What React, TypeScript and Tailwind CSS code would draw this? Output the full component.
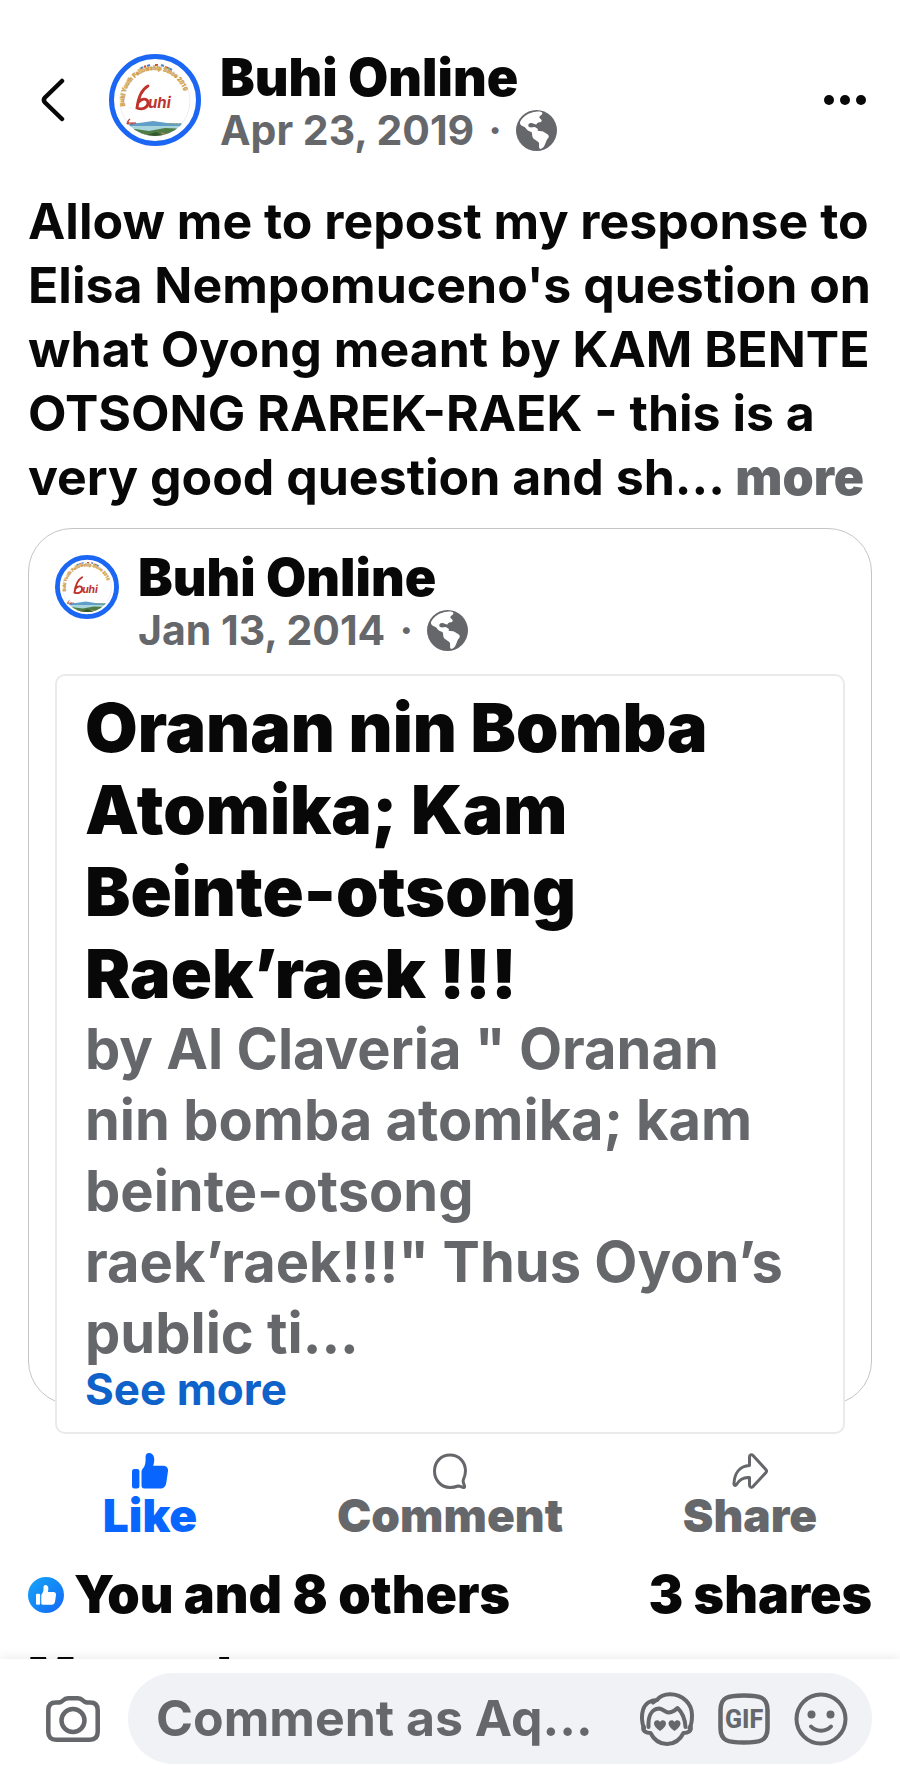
import type { ReactNode } from "react";

const font = "font-[Inter,'Liberation_Sans',sans-serif]";

function PageLogo({ className, ring = 5 }: { className: string; ring?: number }) {
  return (
    <svg viewBox="0 0 92 92" className={className} role="img" aria-label="Buhi Online">
      <defs>
        <path id="logo-arc" d="M16 52 A30.500 30.500 0 1 1 76 52" />
        <clipPath id="logo-clip">
          <circle cx="46" cy="46" r="36" />
        </clipPath>
      </defs>
      <circle cx="46" cy="46" r={46 - ring / 2} fill="#fff" stroke="#1b66f2" strokeWidth={ring} />
      <circle cx="46" cy="47" r="35" fill="none" stroke="#e3dfe6" strokeWidth="0.600" />
      <g clipPath="url(#logo-clip)">
        <path d="M8 70 L30 69 L44 67 L58 69 L84 70 V73 H8Z" fill="#5f9fc9" />
        <path d="M8 72 H84 V78 H8Z" fill="#a9d6dc" />
        <path d="M8 75 L26 75 L40 77 L56 74 L84 75 V92 H8Z" fill="#4f7d45" />
        <path d="M30 79 l8 2 l9 -3 l8 4 l10 -3 l-8 7 h-22Z" fill="#35592f" />
        <path d="M36 81 l5 1 M52 79 l4 1 M47 84 l5 -1" stroke="#b5825c" strokeWidth="1.500" />
      </g>
      <path
        d="M18 70 C18 67 20 66 21 65 M18 70 C20 70 21 68 19 68 M22 68 v2 h2 v-2 M26 68 v2"
        fill="none"
        stroke="#c0412f"
        strokeWidth="1.200"
      />
      <path d="M58 70 h14" stroke="#7d9f88" strokeWidth="1.500" strokeDasharray="2 1" />
      <path
        d="M31 15 l3 -2 M38 12 l3 -1 M52 11 l3 1 M59 14 l4 2"
        stroke="#4a83c4"
        strokeWidth="2"
      />
      <path d="M35 13 l2 -1 M46 11 l3 0 M56 13 l3 1" stroke="#d4502f" strokeWidth="2" />
      <text
        fontSize="6"
        fontWeight="700"
        fontFamily="Roboto, sans-serif"
        fill="#f2dca0"
        stroke="#cfa052"
        strokeWidth="0.600"
      >
        <textPath href="#logo-arc">Buhi Youth Fellowship Since 2010</textPath>
      </text>
      <path
        d="M39 32 C32 36 29 45 28 54 C33 56 39 54 39 49 C39 44 33 44 30 48"
        fill="none"
        stroke="#c0332c"
        strokeWidth="2.800"
        strokeLinecap="round"
      />
      <text x="39" y="54" fontSize="15" fontWeight="700" fontStyle="italic" fill="#c0332c">
        uhi
      </text>
    </svg>
  );
}

function GlobeIcon() {
  return (
    <svg viewBox="0 0 123 123" className="size-[41px] shrink-0" aria-label="Public">
      <circle cx="61.500" cy="61.500" r="61.500" fill="#65676b" />
      <path
        d="M12 36 C20 18 42 6 60 5 C68 4 78 5 79 9 C80 15 72 16 70 21 C69 26 78 27 77 33 C76 38 64 36 62 42 C60 47 52 38 44 39 C36 40 34 50 42 52 C50 53 56 49 60 53 C66 56 68 59 64 62 C74 62 84 64 88 69 C97 73 101 78 97 84 C92 88 91 93 89 98 C86 107 82 114 74 117 C67 117 70 106 69 100 C66 92 53 90 50 82 C47 75 50 70 46 66 C38 64 32 60 29 54 C24 48 10 48 12 36Z"
        fill="#fff"
      />
    </svg>
  );
}

function ThumbIcon({ className }: { className: string }) {
  return (
    <svg viewBox="0 0 34 34" className={className} fill="currentColor" aria-hidden="true">
      <rect x="0" y="15" width="7" height="18.500" rx="2.200" />
      <path d="M9 18 C9 16.500 9.500 15.500 10.500 14.500 C12 12.500 12.800 10 12.800 7 V3.500 C12.800 1.500 14 0 16 0 C19 0 21 2.500 21 6 C21 8.500 20.600 10.500 20 12 H29.500 C32.500 12 34.400 14 34 17 L32.400 28 C31.800 31.500 30 33.500 26.500 33.500 H11.500 C10 33.500 9 32.500 9 31Z" />
    </svg>
  );
}

function CommentIcon() {
  return (
    <svg viewBox="0 0 36 36" className="size-9" fill="none" stroke="currentColor" strokeWidth="3" strokeLinejoin="round" aria-hidden="true">
      <path d="M18 2 C27 2 33.500 9 33.500 18 C33.500 21.500 32.300 24.500 31.300 27 C30.500 29 32.300 31.500 32.600 33.500 C32.700 34.600 32 34.800 31 34.400 C29.500 33.800 27.500 32.700 26 33 C23.500 34 21 34.500 18 34.500 C9 34.500 2.500 27 2.500 18 C2.500 9 9 2 18 2Z" />
    </svg>
  );
}

function ShareIcon() {
  return (
    <svg viewBox="0 0 36 36" className="size-9" fill="none" stroke="currentColor" strokeWidth="3" strokeLinejoin="round" aria-hidden="true">
      <path d="M17.500 12.500 V4 C17.500 1.600 19.500 1 21 2.500 L33.800 16.500 C34.800 17.600 34.800 18.600 33.800 19.700 L21 33.500 C19.500 35 17.500 34.400 17.500 32 V24.500 C12 24 7.500 26.500 4.500 31.500 C3.500 33 1.800 32.500 2 30.500 C2.500 20.500 7.500 13 17.500 12.500Z" />
    </svg>
  );
}

function CameraIcon() {
  return (
    <svg viewBox="0 0 54 46" className="h-[46px] w-[54px]" fill="none" stroke="currentColor" strokeWidth="4.500" strokeLinejoin="round" aria-hidden="true">
      <path d="M10 6.500 C14 6.500 15 6.500 17 4.500 C18.500 3 19.500 2.300 22 2.300 H32 C34.500 2.300 35.500 3 37 4.500 C39 6.500 40 6.500 44 6.500 C49 6.500 51.700 9 51.700 14 V36 C51.700 41 49 43.700 44 43.700 H10 C5 43.700 2.300 41 2.300 36 V14 C2.300 9 5 6.500 10 6.500Z" />
      <circle cx="27" cy="24.500" r="11.500" />
    </svg>
  );
}

function AvatarIcon() {
  return (
    <svg viewBox="0 0 54 54" className="size-[54px]" fill="none" stroke="currentColor" strokeWidth="4" strokeLinejoin="round" strokeLinecap="round" aria-hidden="true">
      <path d="M4 36 C1.500 31 1.500 23 3 18 C5 11 11 8 17 8 C20 4 25 2.300 30 2.300 C43 2.300 52 12 52 23 C52 28 51.500 33 49.500 36" />
      <path d="M17 8 C15.500 8.600 14 9.500 13 10.500" />
      <path d="M8.500 35 C8 25 11 17 19 16.500 C22 16.500 25 20 28 20.500 C32 20.500 35 18.500 37.500 16 C43 21 45 27 45.500 35" />
      <path d="M3.500 34 C2 39 6 41 10.500 41 C14 48 20 52 27 52 C34 52 40 48 43.500 41 C48 41 52 39 50.500 34" />
      <g fill="currentColor" stroke="none">
        <path d="M20 39 C16 36 14 34 14 31.500 C14 28 18.500 27 20 30 C21.500 27 26 28 26 31.500 C26 34 24 36 20 39Z" />
        <path d="M34.500 39 C30.500 36 28.500 34 28.500 31.500 C28.500 28 33 27 34.500 30 C36 27 40.500 28 40.500 31.500 C40.500 34 38.500 36 34.500 39Z" />
      </g>
    </svg>
  );
}

function GifIcon() {
  return (
    <svg viewBox="0 0 52 52" className="size-[52px]" fill="none" aria-hidden="true">
      <path
        d="M26 2.500 C42 2.500 49.500 4 49.500 17 V35 C49.500 48 42 49.500 26 49.500 C10 49.500 2.500 48 2.500 35 V17 C2.500 4 10 2.500 26 2.500Z"
        stroke="currentColor"
        strokeWidth="4.500"
      />
      <text
        x="26"
        y="35"
        textAnchor="middle"
        fill="currentColor"
        fontSize="25"
        fontWeight="800"
        fontFamily="Roboto, sans-serif"
      >
        GIF
      </text>
    </svg>
  );
}

function SmileIcon() {
  return (
    <svg viewBox="0 0 54 54" className="size-[54px]" fill="none" stroke="currentColor" strokeWidth="4" strokeLinecap="round" aria-hidden="true">
      <circle cx="27" cy="27" r="24.500" />
      <path d="M17 34.500 C22 40 32 40 37 34.500" />
      <circle cx="17.500" cy="22.500" r="4" fill="currentColor" stroke="none" />
      <circle cx="36.500" cy="22.500" r="4" fill="currentColor" stroke="none" />
    </svg>
  );
}

function Byline({ date, className }: { date: string; className?: string }) {
  return (
    <div className={`min-w-0 ${className ?? ""}`}>
      <a href="#page" className="block text-[52px] leading-14 font-black">
        Buhi Online
      </a>
      <div className="flex items-center text-[41px] leading-12 font-bold text-[#65676b]">
        <span>{date}</span>
        <span className="w-[42px] text-center">·</span>
        <GlobeIcon />
      </div>
    </div>
  );
}

function Action({ icon, label, className }: { icon: ReactNode; label: string; className?: string }) {
  return (
    <button type="button" className={`flex flex-col items-center ${className ?? ""}`}>
      {icon}
      <span className="text-[46px] leading-[52px] font-black">{label}</span>
    </button>
  );
}

export default function App() {
  return (
    <div className={`flex h-screen flex-col bg-white text-[#080809] ${font}`}>
      <main className="min-h-0 flex-1 overflow-hidden">
        {/* Post header */}
        <header className="flex items-center pt-[46px] pr-[34px] pb-[35px] pl-10">
          <button type="button" aria-label="Back" className="mr-[43px]">
            <svg viewBox="0 0 26 44" className="h-11 w-[26px]" fill="none" stroke="currentColor" strokeWidth="4.500" strokeLinecap="round" strokeLinejoin="round">
              <path d="M22 3 L5 19.500 Q2.800 22 5 24.500 L22 41" />
            </svg>
          </button>
          <PageLogo className="mr-[19px] size-[92px] shrink-0" />
          <Byline date="Apr 23, 2019" className="pt-1" />
          <button type="button" aria-label="More options" className="ml-auto">
            <svg viewBox="0 0 42 10" className="h-[10px] w-[42px]" fill="currentColor">
              <circle cx="5" cy="5" r="5" />
              <circle cx="21" cy="5" r="5" />
              <circle cx="37" cy="5" r="5" />
            </svg>
          </button>
        </header>

        {/* Post text */}
        <p className="px-7 text-[50px] leading-16 font-bold whitespace-nowrap">
          Allow me to repost my response to
          <br />
          Elisa Nempomuceno's question on
          <br />
          what Oyong meant by KAM BENTE
          <br />
          OTSONG RAREK-RAEK - this is a
          <br />
          very good question and sh...{" "}
          <button type="button" className="font-black text-[#65676b]">
            more
          </button>
        </p>

        {/* Shared post */}
        <article className="mx-7 mt-[19px] mb-[30px] rounded-[44px] border border-[#c4c5c8] px-[26px] pt-[21px]">
          <div className="flex items-start gap-[19px]">
            <PageLogo className="mt-[5px] size-16 shrink-0" ring={7} />
            <Byline date="Jan 13, 2014" />
          </div>
          <div className="mt-5 -mb-[30px] rounded-[10px] border-2 border-[#e9eaeb] bg-white px-7 pt-[10px] pb-[23px]">
            <h2 className="text-[68px] leading-[82px] font-black whitespace-nowrap">
              Oranan nin Bomba
              <br />
              Atomika; Kam
              <br />
              Beinte-otsong
              <br />
              Raek’raek !!!
            </h2>
            <p className="text-[56px] leading-[71px] font-bold whitespace-nowrap text-[#65676b]">
              by Al Claveria " Oranan
              <br />
              nin bomba atomika; kam
              <br />
              beinte-otsong
              <br />
              raek’raek!!!" Thus Oyon’s
              <br />
              public ti...
            </p>
            <a href="#note" className="block text-[44px] leading-10 font-bold text-[#0f62c9]">
              See more
            </a>
          </div>
        </article>

        {/* Actions */}
        <div className="grid grid-cols-3 pt-[18px] text-[#65676b]">
          <Action icon={<ThumbIcon className="size-9" />} label="Like" className="text-[#0866ff]" />
          <Action icon={<CommentIcon />} label="Comment" />
          <Action icon={<ShareIcon />} label="Share" />
        </div>

        <div className="mt-6 flex items-center justify-between px-7 text-[52px] leading-[60px] font-black">
          <a href="#reactions" className="flex items-center gap-[10px]">
            <span className="flex size-9 items-center justify-center rounded-full bg-linear-to-br from-[#1aa5f8] to-[#1a66f5] text-white">
              <ThumbIcon className="size-5" />
            </span>
            You and 8 others
          </a>
          <a href="#shares">3 shares</a>
        </div>

        <button type="button" className="mt-5 ml-7 block text-[50px] leading-[60px] font-black">
          Most relevant
        </button>
      </main>

      {/* Composer */}
      <footer className="relative flex items-center bg-white pt-[14px] pr-7 pb-2 pl-[46px] text-[#65676b] shadow-[0_-2px_10px_rgba(0,0,0,0.08)]">
        <button type="button" aria-label="Add photo" className="mr-7 shrink-0">
          <CameraIcon />
        </button>
        <div className="flex h-[91px] min-w-0 flex-1 items-center gap-6 rounded-full bg-[#f0f2f5] pr-6 pl-7">
          <input
            type="text"
            aria-label="Write a comment"
            placeholder="Comment as Aq..."
            className="min-w-0 flex-1 text-[50px] font-bold outline-none placeholder:text-[#65676b]"
          />
          <button type="button" aria-label="Avatar stickers">
            <AvatarIcon />
          </button>
          <button type="button" aria-label="GIF">
            <GifIcon />
          </button>
          <button type="button" aria-label="Emoji">
            <SmileIcon />
          </button>
        </div>
      </footer>
    </div>
  );
}
